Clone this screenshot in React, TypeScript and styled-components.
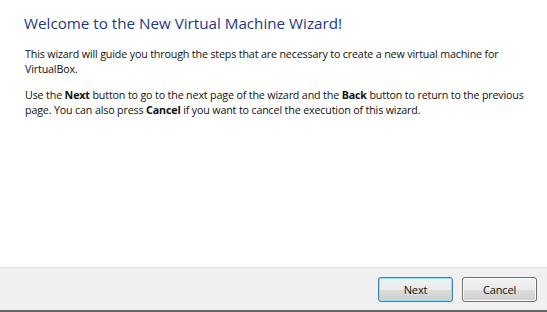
import React from 'react';
import styled, { createGlobalStyle } from 'styled-components';

const GlobalStyle = createGlobalStyle`
  html, body {
    margin: 0;
    padding: 0;
    background: #ffffff;
  }
  #root {
    width: 547px;
    height: 312px;
  }
`;

const Window = styled.div`
  width: 547px;
  height: 312px;
  display: flex;
  flex-direction: column;
  background: #ffffff;
  font-family: 'Open Sans', 'Noto Sans', sans-serif;
  box-sizing: border-box;
  border-bottom: 2px solid #666666;
`;

const Content = styled.div`
  flex: 1;
  padding: 12px 12px 0 25px;
`;

const Title = styled.h1`
  margin: 0 0 0 -1px;
  font-size: 15.2px;
  font-weight: 400;
  color: #22397f;
  line-height: 22px;
`;

const Paragraph = styled.p`
  margin: 0 0 11px;
  font-size: 10.7px;
  letter-spacing: -0.15px;
  line-height: 15px;
  color: #111111;
  &:first-of-type {
    margin-top: 13px;
  }
`;

const Footer = styled.div`
  height: 42px;
  display: flex;
  align-items: center;
  justify-content: flex-end;
  gap: 9px;
  padding: 0 10px 0 0;
  background: #f0f0f0;
  border-top: 1px solid #dfdfdf;
`;

const Button = styled.button<{ $default?: boolean }>`
  width: 75px;
  height: 25px;
  box-sizing: border-box;
  border-radius: 3px;
  border: 1px solid ${(p) => (p.$default ? '#3c7fb1' : '#707070')};
  background: linear-gradient(
    to bottom,
    #f2f2f2 0%,
    #ebebeb 50%,
    #dddddd 51%,
    #cfcfcf 100%
  );
  box-shadow: inset 0 0 0 1px ${(p) => (p.$default ? '#8fe3f7' : '#fcfcfc')};
  font-family: 'Open Sans', 'Noto Sans', sans-serif;
  font-size: 11px;
  letter-spacing: -0.15px;
  color: #111111;
  padding: 0;
  margin-top: 1px;
`;

const App = () => (
  <>
    <GlobalStyle />
    <Window>
      <Content>
        <Title>Welcome to the New Virtual Machine Wizard!</Title>
        <Paragraph>
          This wizard will guide you through the steps that are necessary to create a new virtual machine for
          VirtualBox.
        </Paragraph>
        <Paragraph>
          Use the <b>Next</b> button to go to the next page of the wizard and the <b>Back</b> button to return to
          the previous page. You can also press <b>Cancel</b> if you want to cancel the execution of this wizard.
        </Paragraph>
      </Content>
      <Footer>
        <Button $default>Next</Button>
        <Button>Cancel</Button>
      </Footer>
    </Window>
  </>
);

export default App;
